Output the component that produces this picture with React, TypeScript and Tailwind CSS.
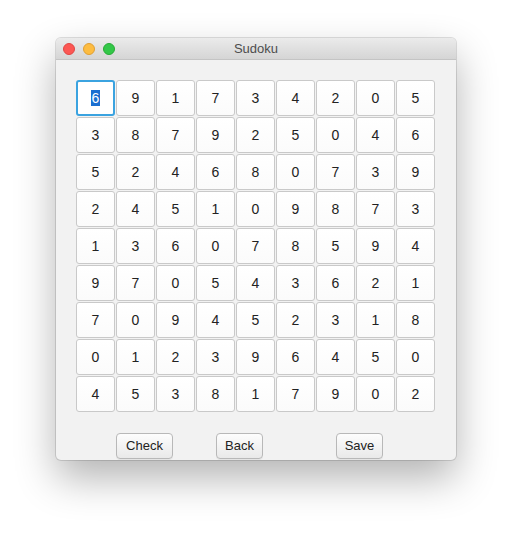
const grid = [
  [6, 9, 1, 7, 3, 4, 2, 0, 5],
  [3, 8, 7, 9, 2, 5, 0, 4, 6],
  [5, 2, 4, 6, 8, 0, 7, 3, 9],
  [2, 4, 5, 1, 0, 9, 8, 7, 3],
  [1, 3, 6, 0, 7, 8, 5, 9, 4],
  [9, 7, 0, 5, 4, 3, 6, 2, 1],
  [7, 0, 9, 4, 5, 2, 3, 1, 8],
  [0, 1, 2, 3, 9, 6, 4, 5, 0],
  [4, 5, 3, 8, 1, 7, 9, 0, 2],
];

const Cell = ({ value, focused }: { value: number; focused?: boolean }) => {
  return (
    <div
      className={
        focused
          ? "w-[39px] h-[36px] rounded-[3px] border-2 border-[#3ba3e0] bg-white flex items-center justify-center"
          : "w-[39px] h-[36px] rounded-[3px] border border-[#c9c9c9] bg-gradient-to-b from-white to-[#fbfbfb] flex items-center justify-center"
      }
    >
      {focused ? (
        <span className="bg-[#1b6fd1] text-white leading-[16px] px-[1px]">{value}</span>
      ) : (
        <span>{value}</span>
      )}
    </div>
  );
};

const Button = ({ label, width }: { label: string; width: string }) => {
  return (
    <div
      className={`${width} h-[26px] rounded-[4px] border border-[#b8b8b8] bg-gradient-to-b from-[#fdfdfd] to-[#e9e9e9] flex items-center justify-center text-[13px] text-[#222] shadow-[0_1px_0_rgba(0,0,0,0.05)]`}
    >
      {label}
    </div>
  );
};

export default function App() {
  return (
    <div
      className="w-[512px] h-[534px] bg-white pt-[38px] pl-[56px]"
      style={{ fontFamily: '"Liberation Sans", Arial, sans-serif' }}
    >
      <div className="w-[400px] h-[422px] rounded-[5px] bg-[#f2f2f2] shadow-[0_18px_40px_rgba(0,0,0,0.3),0_0_0_1px_rgba(0,0,0,0.12)] flex flex-col overflow-hidden">
        <div className="relative h-[22px] bg-gradient-to-b from-[#ebebeb] to-[#d5d5d5] border-b border-[#c4c4c4] flex items-center pl-[7px] gap-[8px]">
          <div className="w-[12px] h-[12px] rounded-full bg-[#fc5753] border border-[#df4744]" />
          <div className="w-[12px] h-[12px] rounded-full bg-[#fdbc40] border border-[#de9f34]" />
          <div className="w-[12px] h-[12px] rounded-full bg-[#33c748] border border-[#27aa35]" />
          <div className="absolute inset-0 flex items-center justify-center text-[13px] text-[#4d4d4d]">
            Sudoku
          </div>
        </div>
        <div className="pt-[20px] pl-[20px] flex flex-col gap-[1px] text-[14px] text-[#222]">
          {grid.map((row, r) => (
            <div key={r} className="flex gap-[1px]">
              {row.map((v, c) => (
                <Cell key={c} value={v} focused={r === 0 && c === 0} />
              ))}
            </div>
          ))}
        </div>
        <div className="mt-[21px] pl-[60px] flex">
          <Button label="Check" width="w-[57px]" />
          <div className="ml-[43px]">
            <Button label="Back" width="w-[47px]" />
          </div>
          <div className="ml-[73px]">
            <Button label="Save" width="w-[47px]" />
          </div>
        </div>
      </div>
    </div>
  );
}
